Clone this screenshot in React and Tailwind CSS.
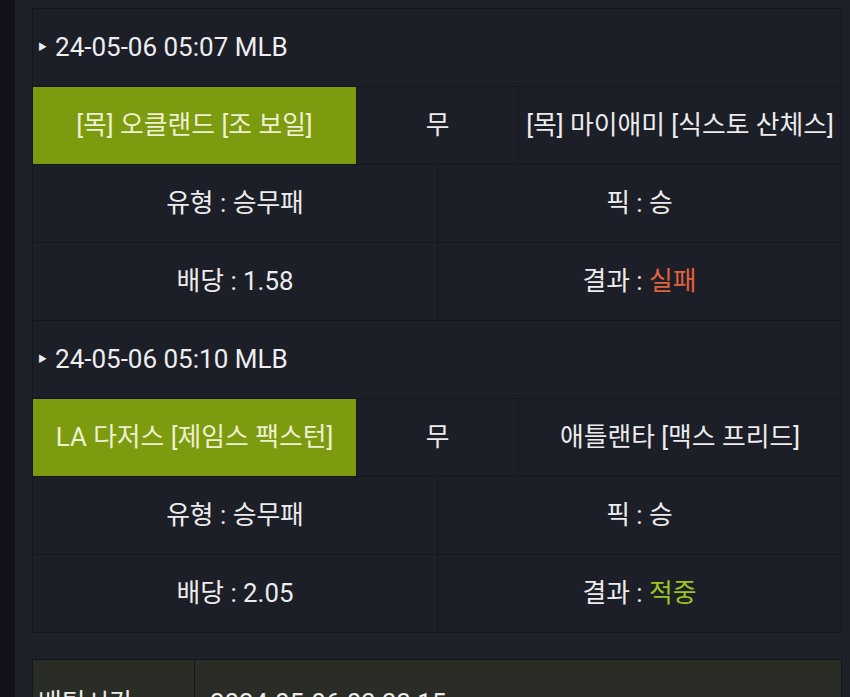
import React from "react";

const font = { fontFamily: "Roboto, 'Noto Sans CJK KR', sans-serif" };

function Header({ children }) {
  return (
    <div className="flex h-[78px] items-center border-b border-[#15171e] pl-[5px] text-[26px] text-[#eeeef0]">
      <span className="mr-[8px] text-[9px]">▶</span>
      <span>{children}</span>
    </div>
  );
}

function GameRow({ home, away }) {
  return (
    <div className="flex h-[78px] border-b border-[#15171e] text-[25.8px]">
      <div className="flex w-[323px] items-center justify-center bg-[#7d9b0e] text-[#eef0d2]">
        {home}
      </div>
      <div className="flex w-[163px] items-center justify-center border-x border-[#15171e] text-[#ececec]">
        무
      </div>
      <div className="flex flex-1 items-center justify-center text-[#ececec]">{away}</div>
    </div>
  );
}

function InfoRow({ left, right }) {
  return (
    <div className="flex h-[78px] border-b border-[#15171e] text-[25.8px] text-[#ececec]">
      <div className="flex w-[405px] items-center justify-center border-r border-[#15171e]">{left}</div>
      <div className="flex flex-1 items-center justify-center">{right}</div>
    </div>
  );
}

function Bet({ date, home, away, odds, result, resultClass }) {
  return (
    <>
      <Header>{date}</Header>
      <GameRow home={home} away={away} />
      <InfoRow left="유형 : 승무패" right="픽 : 승" />
      <InfoRow
        left={`배당 : ${odds}`}
        right={
          <span>
            결과 : <span className={resultClass}>{result}</span>
          </span>
        }
      />
    </>
  );
}

export default function App() {
  return (
    <div className="flex h-[697px] overflow-hidden bg-[#12131a]" style={font}>
      <div className="w-[15px] shrink-0" />
      <div className="flex-1 bg-[#1d1f29] pl-[17px] pr-[8px] pt-[8px]">
        <div className="border-x border-t border-[#15171e] bg-[#1c1e28]">
          <Bet
            date="24-05-06 05:07 MLB"
            home="[목] 오클랜드 [조 보일]"
            away="[목] 마이애미 [식스토 산체스]"
            odds="1.58"
            result="실패"
            resultClass="text-[#e0623c]"
          />
          <Bet
            date="24-05-06 05:10 MLB"
            home="LA 다저스 [제임스 팩스턴]"
            away="애틀랜타 [맥스 프리드]"
            odds="2.05"
            result="적중"
            resultClass="text-[#9dc41e]"
          />
        </div>
        <div className="mt-[26px] flex h-[80px] border border-[#15171e] bg-[#2a2d25] text-[25.8px] text-[#ececec]">
          <div className="w-[162px] border-r border-[#15171e] pl-[5px] pt-[24px]">배팅시간 :</div>
          <div className="flex-1 pl-[15px] pt-[24px]">2024-05-06 03:33:15</div>
        </div>
      </div>
    </div>
  );
}
